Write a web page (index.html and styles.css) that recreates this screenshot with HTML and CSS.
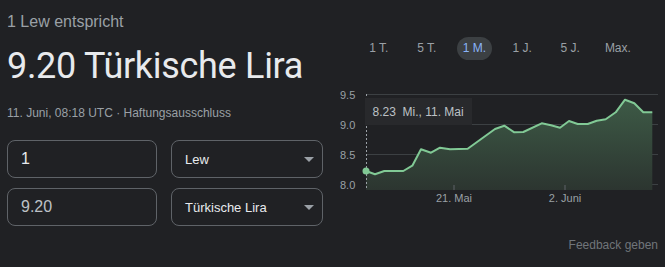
FILE: index.html
```html
<!DOCTYPE html>
<html lang="de">
<head>
  <meta charset="UTF-8">
  <title>Lew in Türkische Lira</title>
  <link rel="stylesheet" href="styles.css">
</head>
<body>

<div class="page">
  <div class="left">
    <div class="lead">1 Lew entspricht</div>
    <div class="big">9.20 Türkische Lira</div>
    <div class="meta">11. Juni, 08:18 UTC · <span class="link">Haftungsausschluss</span></div>

    <div class="converter">
      <div class="field"><input class="amount" type="text" value="1"></div>
      <div class="field select">
        <span>Lew</span>
        <span class="caret"></span>
      </div>
      <div class="field"><input class="amount result" type="text" value="9.20"></div>
      <div class="field select">
        <span>Türkische Lira</span>
        <span class="caret"></span>
      </div>
    </div>
  </div>

  <div class="right">
    <div class="tabs">
      <div class="tab"><span>1 T.</span></div>
      <div class="tab"><span>5 T.</span></div>
      <div class="tab active"><span>1 M.</span></div>
      <div class="tab"><span>1 J.</span></div>
      <div class="tab"><span>5 J.</span></div>
      <div class="tab"><span>Max.</span></div>
    </div>

    <!-- chart uses page coordinates through the viewBox -->
    <svg class="chart" width="330" height="125" viewBox="335 85 330 125">
      <defs>
        <linearGradient id="area" x1="0" y1="0" x2="0" y2="1">
          <stop offset="0" stop-color="#3d5a46"/>
          <stop offset="1" stop-color="#2c3530"/>
        </linearGradient>
      </defs>

      <g class="grid">
        <line x1="366" y1="94.5" x2="658" y2="94.5"/>
        <line x1="366" y1="124.5" x2="658" y2="124.5"/>
        <line x1="366" y1="154.5" x2="658" y2="154.5"/>
        <line x1="366" y1="184.5" x2="658" y2="184.5"/>
      </g>
      <g class="ylabels">
        <text x="340" y="98.5">9.5</text>
        <text x="340" y="128.5">9.0</text>
        <text x="340" y="158.5">8.5</text>
        <text x="340" y="188.5">8.0</text>
      </g>

      <polygon class="area" points="366,171 375,174.3 384.3,171 403.3,171 412.3,165.7 421,149.3 431,152.7 440,147.7 450,149.3 467.7,148.7 495,129 504.3,125.7 514.3,132.3 523.3,132 541.7,123.3 551,125.3 560,127.7 569,121 577.7,124 587.7,124 596.7,120.7 605.7,119.3 615.7,112.3 625,99.7 634.3,103.3 643.3,112.3 652.3,112.3 652.3,190 366,190"/>
      <polyline class="line" points="366,171 375,174.3 384.3,171 403.3,171 412.3,165.7 421,149.3 431,152.7 440,147.7 450,149.3 467.7,148.7 495,129 504.3,125.7 514.3,132.3 523.3,132 541.7,123.3 551,125.3 560,127.7 569,121 577.7,124 587.7,124 596.7,120.7 605.7,119.3 615.7,112.3 625,99.7 634.3,103.3 643.3,112.3 652.3,112.3"/>

      <line class="cursor" x1="366.5" y1="94" x2="366.5" y2="190"/>
      <line class="tick" x1="454" y1="185" x2="454" y2="190"/>
      <line class="tick" x1="565" y1="185" x2="565" y2="190"/>
      <text class="xlabel" x="454" y="202">21. Mai</text>
      <text class="xlabel" x="565" y="202">2. Juni</text>

      <circle class="dot" cx="366" cy="171" r="3.5"/>

      <rect class="tip" x="365" y="98" width="107" height="27"/>
      <text class="tip-text" x="372.5" y="115.5">8.23&#160;&#160;Mi., 11. Mai</text>
    </svg>

    <div class="feedback">Feedback geben</div>
  </div>
</div>

</body>
</html>
```

FILE: styles.css
```css
body {
  margin: 0;
  background: #202124;
  font-family: "Liberation Sans", Arial, sans-serif;
  color: #e8eaed;
}
.page {
  display: flex;
  height: 267px;
  overflow: hidden;
}
.left {
  width: 335px;
  padding: 12px 0 0 7px;
  box-sizing: border-box;
}
.lead {
  font-size: 16px;
  line-height: 20px;
  color: #9aa0a6;
}
.big {
  font-family: Roboto, sans-serif;
  font-size: 36px;
  letter-spacing: -0.3px;
  line-height: 48px;
  margin-top: 10px;
  color: #e8eaed;
}
.meta {
  font-size: 12px;
  line-height: 16px;
  margin-top: 15px;
  color: #9aa0a6;
}
.converter {
  display: grid;
  grid-template-columns: 150px 152px;
  grid-auto-rows: 38px;
  gap: 10px 14px;
  margin-top: 19px;
}
.field {
  border: 1px solid #5f6368;
  border-radius: 8px;
  box-sizing: border-box;
  display: flex;
  align-items: center;
}
.amount {
  background: transparent;
  border: none;
  outline: none;
  width: 100%;
  padding: 0 13px;
  font-family: "Liberation Sans", Arial, sans-serif;
  font-size: 16px;
  color: #e8eaed;
}
.amount.result {
  color: #bdc1c6;
}
.select {
  justify-content: space-between;
  padding: 0 8px 0 13px;
  font-size: 13px;
  color: #e8eaed;
}
.caret {
  width: 0;
  height: 0;
  border-left: 5px solid transparent;
  border-right: 5px solid transparent;
  border-top: 5px solid #9aa0a6;
}
.right {
  flex: 1;
  display: flex;
  flex-direction: column;
}
.tabs {
  display: flex;
  margin: 37px 0 0 20px;
}
.tab {
  width: 47.8px;
  display: flex;
  justify-content: center;
}
.tab span {
  height: 23px;
  line-height: 23px;
  padding: 0 5.5px;
  border-radius: 12px;
  font-size: 12px;
  color: #9aa0a6;
}
.tab.active span {
  background: #3c4043;
  color: #8ab4f8;
}
.chart {
  display: block;
  margin-top: 25px;
}
.grid line {
  stroke: #3c4043;
  stroke-width: 1;
}
.ylabels text {
  font-size: 11px;
  fill: #9aa0a6;
}
.area {
  fill: url(#area);
}
.line {
  fill: none;
  stroke: #81c995;
  stroke-width: 2;
  stroke-linejoin: round;
}
.cursor {
  stroke: #9aa0a6;
  stroke-width: 1;
  stroke-dasharray: 2 2;
}
.tick {
  stroke: #5f6368;
}
.xlabel {
  font-size: 11px;
  fill: #9aa0a6;
  text-anchor: middle;
}
.dot {
  fill: #81c995;
}
.tip {
  fill: #28292c;
}
.tip-text {
  font-size: 12px;
  fill: #bdc1c6;
}
.feedback {
  margin-top: 27px;
  padding-right: 7px;
  text-align: right;
  font-size: 12px;
  line-height: 16px;
  color: #70757a;
}
```
